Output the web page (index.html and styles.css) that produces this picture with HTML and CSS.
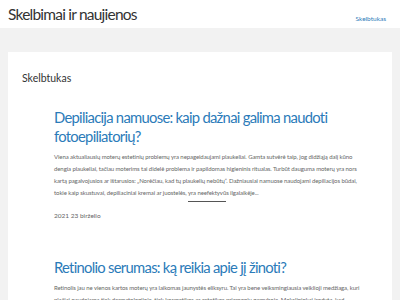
FILE: index.html
```html
<!DOCTYPE html>
<html lang="lt">
<head>
<meta charset="utf-8">
<title>Skelbimai ir naujienos</title>
<link rel="stylesheet" href="styles.css">
</head>
<body>
<header class="site-header">
  <div class="brand">Skelbimai ir naujienos</div>
  <nav class="nav"><a href="#">Skelbtukas</a></nav>
</header>
<main class="page">
  <section class="card">
    <h1 class="section-title">Skelbtukas</h1>
    <article class="post">
      <h2 class="post-title"><a href="#">Depiliacija namuose: kaip dažnai galima naudoti fotoepiliatorių?</a></h2>
      <p class="post-text">Viena aktualiausių moterų estetinių problemų yra nepageidaujami plaukeliai. Gamta sutvėrė taip, jog didžiąją dalį kūno dengia plaukeliai, tačiau moterims tai didelė problema ir papildomas higieninis ritualas. Turbūt dauguma moterų yra nors kartą pagalvojusios ar ištarusios: „Norėčiau, kad tų plaukelių nebūtų“. Dažniausiai namuose naudojami depiliacijos būdai, tokie kaip skustuvai, depiliaciniai kremai ar juostelės, yra neefektyvūs ilgalaikėje...</p>
      <div class="sep"></div>
      <div class="post-date">2021 23 birželio</div>
    </article>
    <article class="post">
      <h2 class="post-title"><a href="#">Retinolio serumas: ką reikia apie jį žinoti?</a></h2>
      <p class="post-text">Retinolis jau ne vienos kartos moterų yra laikomas jaunystės eliksyru. Tai yra bene veiksmingiausia veiklioji medžiaga, kuri plačiai naudojama tiek dermatologijoje, tiek kosmetikos ar estetikos priemonių gamyboje. Mokslininkai įrodyta, kad retinolis...</p>
    </article>
  </section>
</main>
</body>
</html>
```
FILE: styles.css
```css
* { box-sizing: border-box; }
html, body { margin: 0; padding: 0; }
body {
  background: #f2f2f2;
  font-family: Lato, "Noto Sans", sans-serif;
  color: #333;
}
.site-header {
  background: #fff;
  height: 28px;
  display: flex;
  align-items: center;
  justify-content: space-between;
  padding: 0 14px 0 8px;
}
.brand {
  font-size: 15.5px;
  letter-spacing: -0.78px;
  color: #333;
}
.nav a {
  font-size: 6.5px;
  color: #2b7bb9;
  text-decoration: none;
}
.page {
  padding: 24px 8px 0 8px;
}
.card {
  background: #fff;
  padding: 20px 14px 0 14px;
  min-height: 260px;
}
.section-title {
  margin: 0;
  font-weight: 400;
  font-size: 10.5px;
  line-height: 12px;
  color: #333;
}
.post {
  padding: 24px 18px 0 32px;
}
.post + .post { padding-top: 38px; }
.post-title {
  margin: 0;
  font-weight: 400;
  font-size: 14.8px;
  letter-spacing: -0.72px;
  line-height: 19px;
}
.post-title a { color: #2b7bb9; text-decoration: none; }
.post-text {
  margin: 5px 0 0 0;
  font-size: 6px;
  letter-spacing: -0.08px;
  line-height: 12px;
  color: #666;
}
.sep {
  width: 38px;
  height: 1px;
  background: #555;
  margin: 2px auto 0 auto;
}
.post-date {
  margin-top: 9px;
  font-size: 6.5px;
  line-height: 9px;
  color: #666;
}
```
